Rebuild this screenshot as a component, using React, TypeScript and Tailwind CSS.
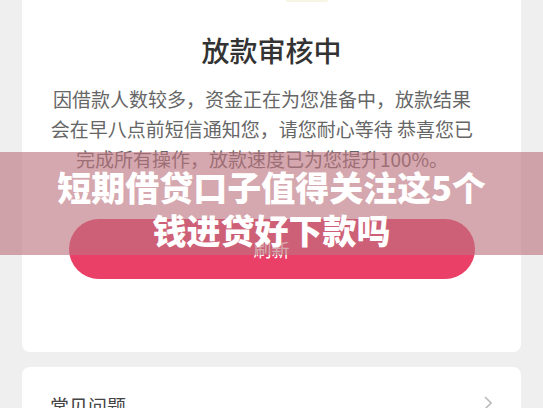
export default function App() {
  return (
    <div
      className="relative h-[408px] overflow-hidden bg-[#efefef]"
      style={{ fontFamily: '"Noto Sans CJK SC", "Noto Sans", sans-serif' }}
    >
      <div className="px-[22px]">
        {/* status card, scrolled so its icon is mostly off screen */}
        <div className="flex flex-col items-center rounded-b-[8px] bg-white pb-[73px]">
          <div className="ml-[70px] h-[2px] w-[42px] rounded-b-full bg-[#f6f4e2]" />
          <h1 className="mt-[28px] text-[28px] leading-[40px] font-medium text-[#333]">放款审核中</h1>
          <p className="mt-[14px] pr-[19px] text-center text-[19px] leading-[30px] text-[#666]">
            因借款人数较多，资金正在为您准备中，放款结果
            <br />
            会在早八点前短信通知您，请您耐心等待 恭喜您已
            <br />
            完成所有操作，放款速度已为您提升100%。
          </p>
          <button className="mt-[45px] h-[60px] w-[406px] rounded-full bg-[#ea4068] text-[18px] text-white">
            刷新
          </button>
        </div>

        <div className="mt-[15px] flex items-center justify-between rounded-[8px] bg-white pt-[24px] pl-[28px] pr-[29px]">
          <span className="text-[19px] leading-[30px] text-[#444]">常见问题</span>
          <svg width="8" height="14" viewBox="0 0 8 14" className="mb-[6px]">
            <path d="M1 1l6 6-6 6" fill="none" stroke="#bbb" strokeWidth="1.6" />
          </svg>
        </div>
      </div>

      {/* caption banner laid over the page */}
      <div className="absolute inset-x-0 top-[152px] flex h-[103px] flex-col items-center justify-center bg-[rgba(188,115,127,0.63)] pt-[8px] text-[34px] leading-[43px] font-black text-white">
        <div>短期借贷口子值得关注这5个</div>
        <div>钱进贷好下款吗</div>
      </div>
    </div>
  );
}
